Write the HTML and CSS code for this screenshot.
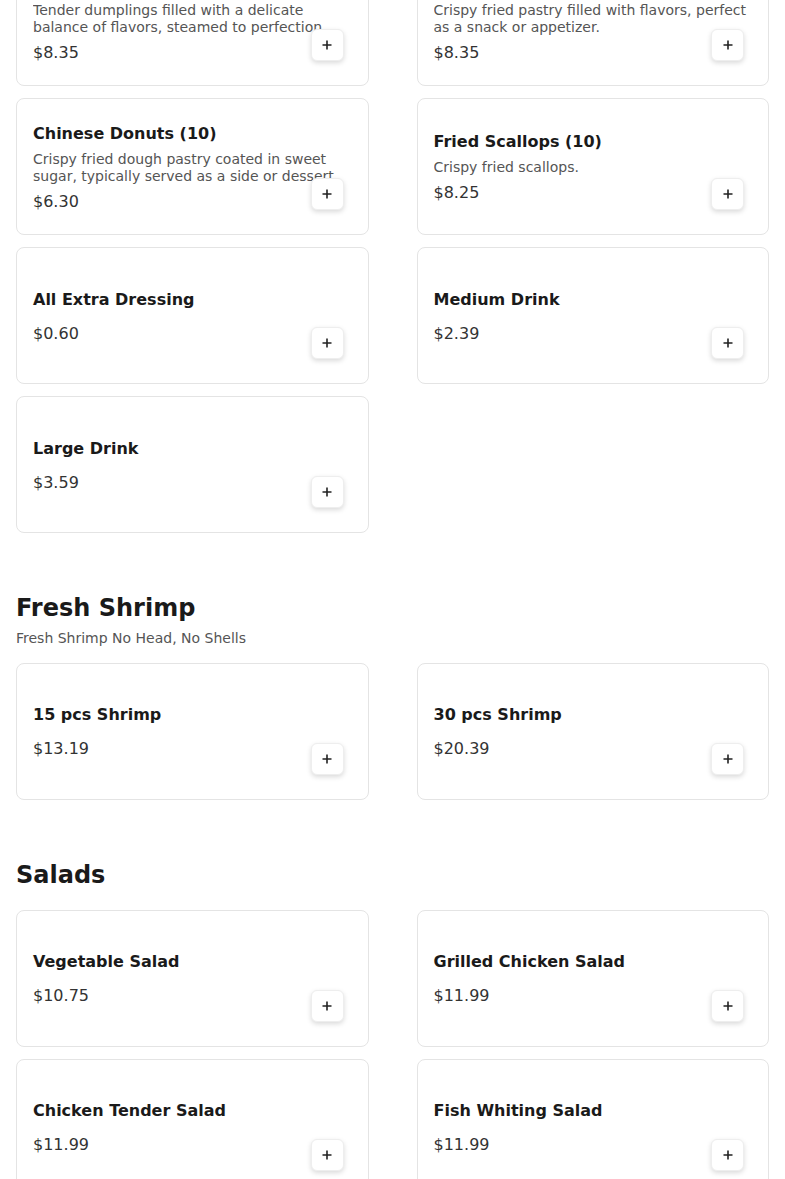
FILE: index.html
```html
<!DOCTYPE html>
<html lang="en">
<head>
    <meta charset="UTF-8">
    <meta name="viewport" content="width=device-width, initial-scale=1.0">
    <title>Menu</title>
    <link rel="stylesheet" href="styles.css">
</head>
<body>
    <main class="menu">
        <!-- Appetizers (page is scrolled past its header) -->
        <section class="category category-scrolled">
            <div class="items">
                <article class="item">
                    <h3 class="item-name">Steamed Dumplings (8)</h3>
                    <p class="item-desc">Tender dumplings filled with a delicate balance of flavors, steamed to perfection.</p>
                    <p class="item-price">$8.35</p>
                    <button class="add-btn" type="button" aria-label="Add">
                        <svg width="10" height="10" viewBox="0 0 10 10"><path d="M5 0.5v9M0.5 5h9"/></svg>
                    </button>
                </article>
                <article class="item">
                    <h3 class="item-name">Fried Dumplings (8)</h3>
                    <p class="item-desc">Crispy fried pastry filled with flavors, perfect as a snack or appetizer.</p>
                    <p class="item-price">$8.35</p>
                    <button class="add-btn" type="button" aria-label="Add">
                        <svg width="10" height="10" viewBox="0 0 10 10"><path d="M5 0.5v9M0.5 5h9"/></svg>
                    </button>
                </article>
                <article class="item">
                    <h3 class="item-name">Chinese Donuts (10)</h3>
                    <p class="item-desc">Crispy fried dough pastry coated in sweet sugar, typically served as a side or dessert.</p>
                    <p class="item-price">$6.30</p>
                    <button class="add-btn" type="button" aria-label="Add">
                        <svg width="10" height="10" viewBox="0 0 10 10"><path d="M5 0.5v9M0.5 5h9"/></svg>
                    </button>
                </article>
                <article class="item">
                    <h3 class="item-name">Fried Scallops (10)</h3>
                    <p class="item-desc">Crispy fried scallops.</p>
                    <p class="item-price">$8.25</p>
                    <button class="add-btn" type="button" aria-label="Add">
                        <svg width="10" height="10" viewBox="0 0 10 10"><path d="M5 0.5v9M0.5 5h9"/></svg>
                    </button>
                </article>
                <article class="item">
                    <h3 class="item-name">All Extra Dressing</h3>
                    <p class="item-price">$0.60</p>
                    <button class="add-btn" type="button" aria-label="Add">
                        <svg width="10" height="10" viewBox="0 0 10 10"><path d="M5 0.5v9M0.5 5h9"/></svg>
                    </button>
                </article>
                <article class="item">
                    <h3 class="item-name">Medium Drink</h3>
                    <p class="item-price">$2.39</p>
                    <button class="add-btn" type="button" aria-label="Add">
                        <svg width="10" height="10" viewBox="0 0 10 10"><path d="M5 0.5v9M0.5 5h9"/></svg>
                    </button>
                </article>
                <article class="item">
                    <h3 class="item-name">Large Drink</h3>
                    <p class="item-price">$3.59</p>
                    <button class="add-btn" type="button" aria-label="Add">
                        <svg width="10" height="10" viewBox="0 0 10 10"><path d="M5 0.5v9M0.5 5h9"/></svg>
                    </button>
                </article>
            </div>
        </section>

        <section class="category">
            <header class="category-header">
                <h2>Fresh Shrimp</h2>
                <p class="category-note">Fresh Shrimp No Head, No Shells</p>
            </header>
            <div class="items">
                <article class="item">
                    <h3 class="item-name">15 pcs Shrimp</h3>
                    <p class="item-price">$13.19</p>
                    <button class="add-btn" type="button" aria-label="Add">
                        <svg width="10" height="10" viewBox="0 0 10 10"><path d="M5 0.5v9M0.5 5h9"/></svg>
                    </button>
                </article>
                <article class="item">
                    <h3 class="item-name">30 pcs Shrimp</h3>
                    <p class="item-price">$20.39</p>
                    <button class="add-btn" type="button" aria-label="Add">
                        <svg width="10" height="10" viewBox="0 0 10 10"><path d="M5 0.5v9M0.5 5h9"/></svg>
                    </button>
                </article>
            </div>
        </section>

        <section class="category">
            <header class="category-header">
                <h2>Salads</h2>
            </header>
            <div class="items">
                <article class="item">
                    <h3 class="item-name">Vegetable Salad</h3>
                    <p class="item-price">$10.75</p>
                    <button class="add-btn" type="button" aria-label="Add">
                        <svg width="10" height="10" viewBox="0 0 10 10"><path d="M5 0.5v9M0.5 5h9"/></svg>
                    </button>
                </article>
                <article class="item">
                    <h3 class="item-name">Grilled Chicken Salad</h3>
                    <p class="item-price">$11.99</p>
                    <button class="add-btn" type="button" aria-label="Add">
                        <svg width="10" height="10" viewBox="0 0 10 10"><path d="M5 0.5v9M0.5 5h9"/></svg>
                    </button>
                </article>
                <article class="item">
                    <h3 class="item-name">Chicken Tender Salad</h3>
                    <p class="item-price">$11.99</p>
                    <button class="add-btn" type="button" aria-label="Add">
                        <svg width="10" height="10" viewBox="0 0 10 10"><path d="M5 0.5v9M0.5 5h9"/></svg>
                    </button>
                </article>
                <article class="item">
                    <h3 class="item-name">Fish Whiting Salad</h3>
                    <p class="item-price">$11.99</p>
                    <button class="add-btn" type="button" aria-label="Add">
                        <svg width="10" height="10" viewBox="0 0 10 10"><path d="M5 0.5v9M0.5 5h9"/></svg>
                    </button>
                </article>
            </div>
        </section>
    </main>
</body>
</html>
```

FILE: styles.css
```css
/* Menu page */
body {
    font-family: "DejaVu Sans", Verdana, sans-serif;
    margin: 0;
    background-color: #fff;
    color: #1a1a1a;
}
.menu {
    padding: 0 16px 40px;
}
.category + .category {
    margin-top: 61px;
}
.category-scrolled {
    margin-top: -51px;
}
.category-header {
    display: flex;
    flex-direction: column;
    margin-bottom: 13px;
}
.category-header h2 {
    margin: 0 0 7px;
    font-size: 24px;
    line-height: 1.2;
    font-weight: bold;
    color: #1a1a1a;
}
.category-note {
    margin: 0 0 3px;
    font-size: 14px;
    line-height: 17px;
    color: #555;
}
.items {
    display: grid;
    grid-template-columns: 1fr 1fr;
    column-gap: 48px;
    row-gap: 12px;
}
.item {
    position: relative;
    display: flex;
    flex-direction: column;
    justify-content: center;
    box-sizing: border-box;
    min-height: 137px;
    padding: 17px 16px 15px;
    border: 1px solid #e4e4e4;
    border-radius: 8px;
    background: #fff;
}
.item-name {
    margin: 0 0 5px;
    font-size: 16px;
    line-height: 24px;
    font-weight: bold;
    color: #1a1a1a;
}
.item-desc {
    margin: 0;
    font-size: 14px;
    line-height: 17px;
    color: #555;
    display: -webkit-box;
    -webkit-line-clamp: 2;
    -webkit-box-orient: vertical;
    overflow: hidden;
}
.item-price {
    margin: 5px 0 0;
    font-size: 16px;
    line-height: 24px;
    color: #333;
}
.add-btn {
    position: absolute;
    right: 24px;
    bottom: 24px;
    width: 33px;
    height: 32px;
    padding: 0;
    display: flex;
    align-items: center;
    justify-content: center;
    background: #fff;
    border: 1px solid #eee;
    border-radius: 6px;
    box-shadow: 0 2px 5px rgba(0, 0, 0, 0.15);
    cursor: pointer;
}
.add-btn svg {
    stroke: #222;
    stroke-width: 1.6;
    fill: none;
}
```
